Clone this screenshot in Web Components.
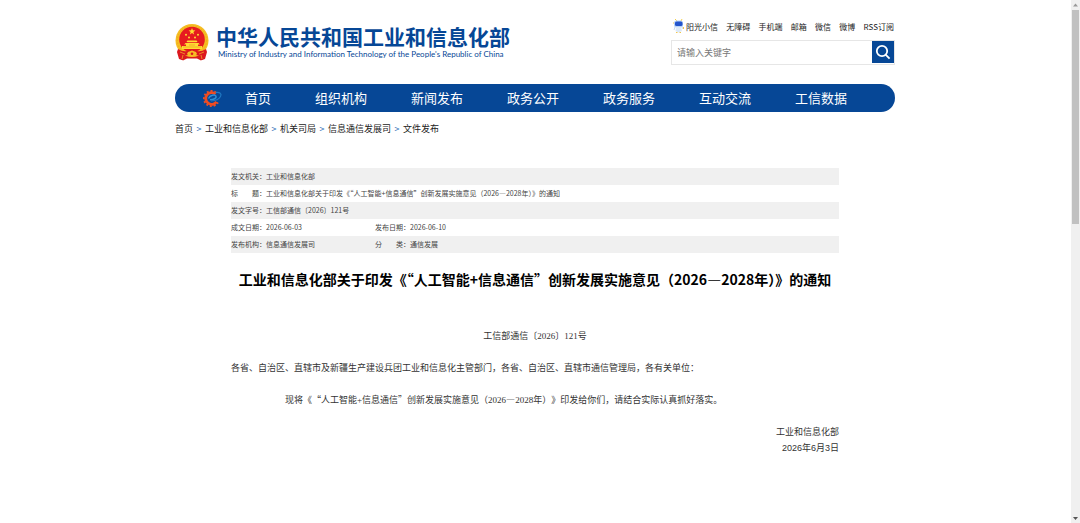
<!DOCTYPE html>
<html lang="zh-CN">
<head>
<meta charset="utf-8">
<title>工业和信息化部关于印发通知</title>
<style>
  html, body { margin: 0; height: 100%; }
  body { font-family: "Noto Sans CJK SC", "Noto Sans", sans-serif; color: #333; background: #fff; --blue: #064796; --width: 720px; }
</style>
</head>
<body>
<miit-page>
  <miit-header></miit-header>
  <miit-nav></miit-nav>
  <miit-crumbs></miit-crumbs>
  <miit-article>
    <miit-meta></miit-meta>
    <span slot="title">工业和信息化部关于印发《“人工智能+信息通信”创新发展实施意见（2026—2028年）》的通知</span>
  </miit-article>
</miit-page>
<script>
function define(name, html) {
  const t = document.createElement('template');
  t.innerHTML = html;
  customElements.define(name, class extends HTMLElement {
    constructor() {
      super();
      this.attachShadow({ mode: 'open' }).append(t.content.cloneNode(true));
    }
  });
}

define('miit-page', `
<style>
  :host { display: grid; grid-template-columns: minmax(0, 1fr) 10px; min-height: 100%; }
  main { display: flex; flex-direction: column; align-items: center; }
</style>
<main><slot></slot></main>
<scroll-rail></scroll-rail>`);

define('scroll-rail', `
<style>
  :host { display: flex; flex-direction: column; align-items: center; background: #f0f0f0; margin-left: 1px; }
  svg { width: 5px; height: 10px; flex: none; }
  .track { flex: 1; width: 7px; }
  .thumb { height: 42.500%; background: #c1c1c1; }
</style>
<svg viewBox="0 0 5 10"><path d="M2.500 3.500 5 6.500H0z" fill="#999"/></svg>
<div class="track"><div class="thumb"></div></div>
<svg viewBox="0 0 5 10"><path d="M0 4h5L2.500 7z" fill="#555"/></svg>`);

define('miit-header', `
<style>
  :host { display: flex; justify-content: space-between; width: 100%; max-width: var(--width); height: 84px; box-sizing: border-box; padding-top: 18px; }
  .logo { display: flex; gap: 7px; color: var(--blue); text-decoration: none; align-self: flex-start; padding-top: 5px; }
  .logo svg { width: 34px; height: 38px; }
  .names { display: flex; flex-direction: column; white-space: nowrap; }
  strong { font-size: 21px; line-height: 26px; font-weight: 700; }
  small { font: 400 8px/10px Lato, sans-serif; padding-left: 2px; }
  .tools { width: 224px; }
  nav { display: flex; justify-content: space-between; align-items: center; height: 16px; padding: 0 1px 0 2px; font-size: 8px; white-space: nowrap; }
  nav a { color: #222; text-decoration: none; display: flex; align-items: center; gap: 2px; }
  nav svg { width: 11px; height: 16px; }
  form { display: flex; align-items: stretch; margin: 6px 0 0; height: 25px; box-sizing: border-box; border: 1px solid #e6e6e6; }
  input { flex: 1; min-width: 0; border: 0; outline: 0; padding: 0 5px; font: 9px "Noto Sans CJK SC", sans-serif; background: none; }
  input::placeholder { color: #777; }
  button { width: 22px; height: 22px; padding: 0; border: 0; background: var(--blue); display: grid; place-items: center; }
  button svg { width: 16px; height: 16px; }
</style>
<a class="logo" href="#">
  <svg viewBox="0 0 34 38" role="img" aria-label="国徽">
    <path d="M5 27h24l1 8-4 2.500-4-2h-10l-4 2-4-2.500z" fill="#d91c1c"/>
    <circle cx="17" cy="17.500" r="16.500" fill="#f5bd22"/>
    <circle cx="17" cy="17.500" r="14.600" fill="none" stroke="#e9a01c" stroke-width=".6" stroke-dasharray="1.500 1.500"/>
    <circle cx="17" cy="16.500" r="12.800" fill="#e61a20"/>
    <path d="m17 5 .9 2.300 2.500.1-2 1.600.7 2.400-2.100-1.400-2.100 1.400.7-2.400-2-1.600 2.500-.1z" fill="#ffdc32"/>
    <g fill="#ffdc32"><circle cx="11" cy="11.800" r="1"/><circle cx="23" cy="11.800" r="1"/><circle cx="14" cy="14.600" r="1"/><circle cx="20" cy="14.600" r="1"/>
    <path d="m11.500 18.500 1-1h9l1 1-1 .8h-9zM10.500 20h13l1.500 1.500H9zM11 21h12v2h4v3H7v-3h4z"/></g>
    <path d="M8 24h18M14 22h6" stroke="#e8921e" stroke-width=".6"/>
    <path d="M3 26q5 3 9 2l5-2 5 2q4 1 9-2l1 3-2 7-3 1-2-4-8-2-8 2-2 4-3-1-2-7z" fill="#dc181e"/>
    <path d="m12 31 1-2 2-.7 2-.8 2 .8 2 .7 1 2-2 2h-6z" fill="#f7bd24"/>
    <circle cx="17" cy="30.700" r="1.300" fill="#dc181e"/>
    <path d="m5 29 5 2m19-2-5 2M8 32l-1 4m19-4 1 4" stroke="#f3a72a" stroke-width=".8"/>
  </svg>
  <span class="names"><strong>中华人民共和国工业和信息化部</strong><small>Ministry of Industry and Information Technology of the People's Republic of China</small></span>
</a>
<div class="tools">
  <nav>
    <a href="#"><svg viewBox="0 0 11 16" aria-hidden="true"><path d="m2 1 2 2M9 1 8 3" stroke="#f4cf4a"/><rect x="1" y="2.500" width="9" height="7" rx="2.500" fill="#b9d3f6"/><rect x="2" y="3.500" width="7.500" height="4.500" rx="1.500" fill="#2254cc"/><path d="M3 9h5l1 4-3.500 1.500L2.500 13z" fill="#dce9f8"/><path d="m2 9-1 3m8-3 1 2" stroke="#c4daf4"/><path d="M3 14.500h1.500m2 0H8M0 4v2m10.500 3v2" stroke="#f1c64a"/></svg>阳光小信</a>
    <a href="#">无障碍</a><a href="#">手机端</a><a href="#">邮箱</a><a href="#">微信</a><a href="#">微博</a><a href="#">RSS订阅</a>
  </nav>
  <form>
    <input type="text" placeholder="请输入关键字" aria-label="请输入关键字">
    <button type="button" aria-label="搜索"><svg viewBox="0 0 16 16" fill="none" stroke="#fff" stroke-width="1.800"><circle cx="7" cy="7" r="5.200"/><path d="m10.600 10.600 4 4"/></svg></button>
  </form>
</div>`);

define('miit-nav', `
<style>
  :host { display: block; width: 100%; max-width: var(--width); }
  nav { display: flex; align-items: center; gap: 44px; height: 28px; box-sizing: border-box; padding-left: 28px; border-radius: 14px; background: var(--blue); }
  svg { width: 20px; height: 20px; margin-right: -22px; }
  a { color: #fff; text-decoration: none; font-size: 13px; line-height: 28px; white-space: nowrap; }
</style>
<nav>
  <svg viewBox="0 0 20 20" fill="none" aria-hidden="true">
    <path d="M13 4.400A7.600 7.600 0 1 0 15 14.500" stroke="#e9502a" stroke-width="1.800" stroke-dasharray="1.900 1.900"/>
    <path d="M12.500 6A5.900 5.900 0 1 0 13.500 13.800" stroke="#ee4c22" stroke-width="2.800"/>
    <path d="M5.500 10.500c1.500-3.500 6.500-4.500 7.500-2.300.8 2-2.500 3.600-6 3.600" stroke="#2d8fd6" stroke-width="1.500"/>
    <path d="M12.500 4.500c4.500-.8 6.500 1.500 5 4-1.500 2.700-5.500 4.300-9.500 4.500" stroke="#2077c0" stroke-width="1.200"/>
  </svg>
  <a href="#">首页</a><a href="#">组织机构</a><a href="#">新闻发布</a><a href="#">政务公开</a><a href="#">政务服务</a><a href="#">互动交流</a><a href="#">工信数据</a>
</nav>`);

define('miit-crumbs', `
<style>
  :host { display: block; width: 100%; max-width: var(--width); }
  nav { display: flex; gap: 3px; padding-top: 9px; font-size: 9px; line-height: 16px; }
  a { color: #222; text-decoration: none; }
  span { color: #2a6bb5; width: 6px; text-align: center; }
</style>
<nav><a href="#">首页</a><span>&gt;</span><a href="#">工业和信息化部</a><span>&gt;</span><a href="#">机关司局</a><span>&gt;</span><a href="#">信息通信发展司</a><span>&gt;</span><a href="#">文件发布</a></nav>`);

define('miit-meta', `
<style>
  :host { display: block; }
  table { width: 100%; table-layout: fixed; border-collapse: collapse; font-size: 7px; line-height: 17px; color: #444; }
  th, td { padding: 0; height: 17px; font-weight: 400; text-align: left; white-space: nowrap; }
  th span { display: inline-flex; width: 28px; justify-content: space-between; }
  th i { font-style: normal; }
  tr:nth-child(odd) { background: #f0f0f0; }
  .l { width: 35px; } .v { width: 109px; }
</style>
<table>
  <colgroup><col class="l"><col class="v"><col class="l"><col></colgroup>
  <tbody>
  <tr><th scope="row">发文机关：</th><td colspan="3">工业和信息化部</td></tr>
  <tr><th scope="row"><span><i>标</i><i>题</i></span>：</th><td colspan="3">工业和信息化部关于印发《“人工智能+信息通信”创新发展实施意见（2026—2028年）》的通知</td></tr>
  <tr><th scope="row">发文字号：</th><td colspan="3">工信部通信〔2026〕121号</td></tr>
  <tr><th scope="row">成文日期：</th><td>2026-06-03</td><th scope="row">发布日期：</th><td>2026-06-10</td></tr>
  <tr><th scope="row">发布机构：</th><td>信息通信发展司</td><th scope="row"><span><i>分</i><i>类</i></span>：</th><td>通信发展</td></tr>
  </tbody>
</table>`);

define('miit-article', `
<style>
  :host { display: block; width: 100%; max-width: 608px; padding-top: 31px; }
  h1 { margin: 16px 0 38px; font-size: 14px; line-height: 21px; font-weight: 700; color: #000; text-align: center; white-space: nowrap; }
  p { margin: 0 0 16px; font-size: 9px; line-height: 16px; text-spacing-trim: space-all; }
  .no { text-align: center; }
  .in { text-indent: 54px; }
  .sign { text-align: right; margin: 0; }
  .n { font-family: "Liberation Serif", serif; }
  .a { font-family: "Liberation Sans", sans-serif; }
</style>
<slot></slot>
<h1><slot name="title"></slot></h1>
<p class="no">工信部通信〔<span class="n">2026</span>〕<span class="n">121</span>号</p>
<p>各省、自治区、直辖市及新疆生产建设兵团工业和信息化主管部门，各省、自治区、直辖市通信管理局，各有关单位：</p>
<p class="in">现将《“人工智能<span class="n">+</span>信息通信”创新发展实施意见（<span class="n">2026</span>—<span class="n">2028</span>年）》印发给你们，请结合实际认真抓好落实。</p>
<p class="sign">工业和信息化部</p>
<p class="sign"><span class="a">2026</span>年<span class="a">6</span>月<span class="a">3</span>日</p>`);
</script>
</body>
</html>
